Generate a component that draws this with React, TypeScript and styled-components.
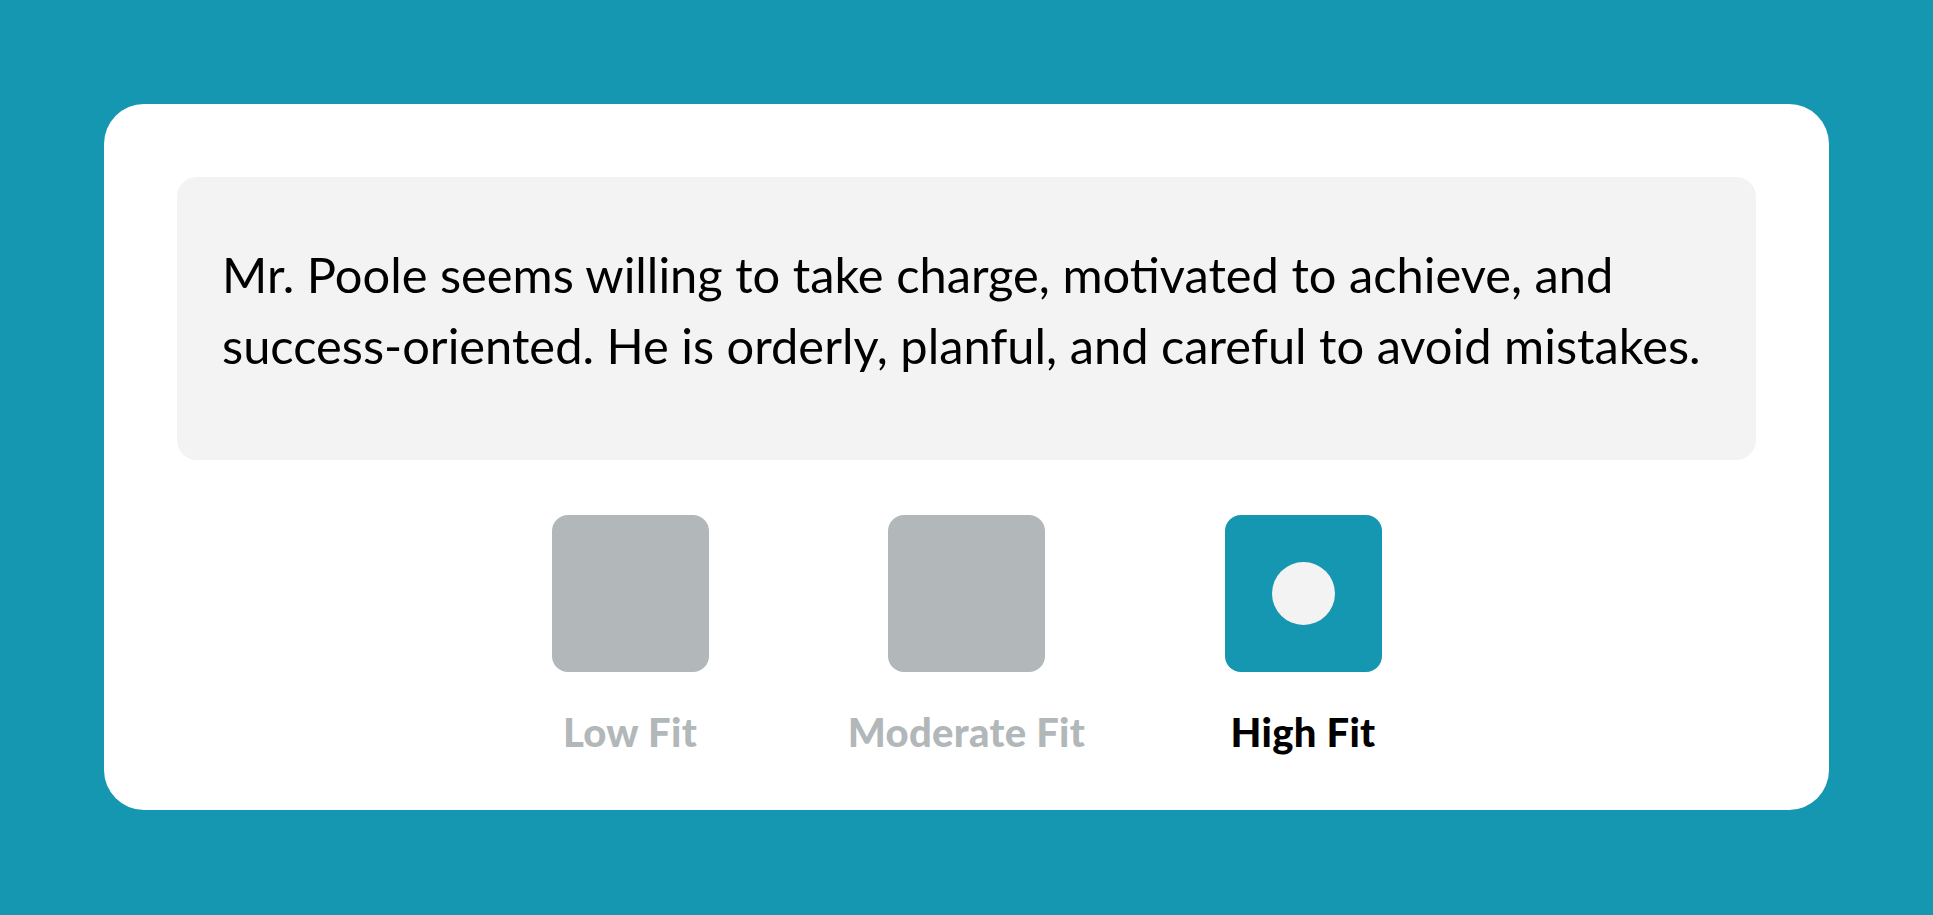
import React from "react";
import styled, { createGlobalStyle } from "styled-components";

const Global = createGlobalStyle`
  html, body { margin: 0; padding: 0; }
  body { background: #1596b1; }
`;

const Page = styled.div`
  box-sizing: border-box;
  width: 1933px;
  height: 915px;
  padding: 104px;
  background: #1596b1;
`;

const Card = styled.div`
  box-sizing: border-box;
  height: 706px;
  background: #ffffff;
  border-radius: 40px;
  padding: 73px 73px 0;
  display: flex;
  flex-direction: column;
  align-items: stretch;
`;

const Statement = styled.div`
  box-sizing: border-box;
  height: 283px;
  background: #f3f3f3;
  border-radius: 20px;
  padding: 62px 44px 0 45px;
  font-family: Lato, "Liberation Sans", sans-serif;
  font-size: 48.8px;
  line-height: 71px;
  color: #000;
  white-space: nowrap;
`;

const Options = styled.div`
  margin-top: 55px;
  display: grid;
  grid-template-columns: repeat(3, 336.5px);
  justify-content: center;
`;

const Option = styled.div`
  display: flex;
  flex-direction: column;
  align-items: center;
`;

const Square = styled.div<{ $active?: boolean }>`
  width: 157px;
  height: 157px;
  border-radius: 16px;
  background: ${(p) => (p.$active ? "#1596b1" : "#b2b7ba")};
  display: flex;
  align-items: center;
  justify-content: center;
`;

const Dot = styled.div`
  width: 63px;
  height: 63px;
  border-radius: 50%;
  background: #f3f3f3;
`;

const Label = styled.div<{ $active?: boolean }>`
  margin-top: 38px;
  font-family: Lato, "Liberation Sans", sans-serif;
  font-weight: 900;
  font-size: 40px;
  line-height: 44px;
  letter-spacing: 0.3px;
  color: ${(p) => (p.$active ? "#000000" : "#b2b7ba")};
`;

const options = [
  { label: "Low Fit", active: false },
  { label: "Moderate Fit", active: false },
  { label: "High Fit", active: true },
];

export default function App() {
  return (
    <>
      <Global />
      <Page>
        <Card>
          <Statement>
            Mr. Poole seems willing to take charge, motivated to achieve, and
            <br />
            success-oriented. He is orderly, planful, and careful to avoid mistakes.
          </Statement>
          <Options>
            {options.map((o) => (
              <Option key={o.label}>
                <Square $active={o.active}>{o.active && <Dot />}</Square>
                <Label $active={o.active}>{o.label}</Label>
              </Option>
            ))}
          </Options>
        </Card>
      </Page>
    </>
  );
}
